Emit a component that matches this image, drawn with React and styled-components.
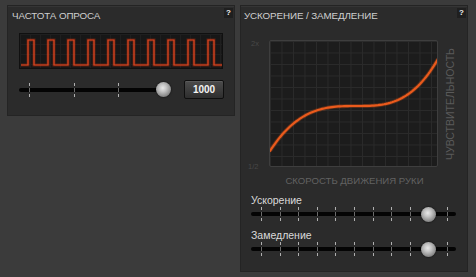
import React from "react";
import styled, { createGlobalStyle } from "styled-components";

const GlobalStyle = createGlobalStyle`
  html, body { margin: 0; padding: 0; background: #3b3b3b; }
  body { font-family: "Liberation Sans", Arial, sans-serif; }
  * { box-sizing: border-box; }
`;

const Page = styled.div`
  width: 476px;
  height: 277px;
  display: flex;
  align-items: flex-start;
  gap: 5px;
  padding: 5px 0 0 7px;
  background: #3b3b3b;
  overflow: hidden;
`;

const Panel = styled.section`
  position: relative;
  width: ${(p) => p.$w}px;
  height: ${(p) => p.$h}px;
  background: #2b2b2b;
  border: 1px solid #242424;
  box-shadow: inset 0 1px 0 #353535;
  display: flex;
  flex-direction: column;
`;

const Title = styled.h2`
  margin: 4px 0 0 ${(p) => p.$left}px;
  font-size: 9.8px;
  line-height: 12px;
  font-weight: normal;
  color: #cfcfcf;
  letter-spacing: -0.1px;
  white-space: nowrap;
`;

const Help = styled.span`
  position: absolute;
  top: 2px;
  right: 1px;
  width: 9px;
  height: 10px;
  background: #1f1f1f;
  color: #f2f2f2;
  font-size: 8px;
  font-weight: bold;
  line-height: 10px;
  text-align: center;
`;

const gridBg = (bg, line, step) => `
  background-color: ${bg};
  background-image:
    linear-gradient(to right, ${line} 1px, transparent 1px),
    linear-gradient(to bottom, ${line} 1px, transparent 1px);
  background-size: ${step}px ${step}px;
`;

const WaveBox = styled.div`
  margin: 11px 0 0 11px;
  width: 204px;
  height: 36px;
  border: 1px solid #101010;
  ${gridBg("#171717", "#1f1f1f", 10)}
  svg { display: block; }
`;

const SliderRow = styled.div`
  display: flex;
  align-items: center;
  margin: 11px 0 0 11px;
  height: 19px;
`;

const Rail = styled.div`
  position: relative;
  width: ${(p) => p.$w}px;
  height: 4px;
  background: #040404;
  border-radius: 2px;
`;

const Tick = styled.span`
  position: absolute;
  top: -5px;
  width: 1px;
  height: 14px;
  background: linear-gradient(
    to bottom,
    #b0b0b0 0 3px,
    transparent 3px 5px,
    #6a6a6a 5px 9px,
    transparent 9px 11px,
    #b0b0b0 11px 14px
  );
`;

const Knob = styled.span`
  position: absolute;
  top: -5.5px;
  width: 15px;
  height: 15px;
  margin-left: -7.5px;
  border-radius: 50%;
  background: radial-gradient(
    circle at 45% 40%,
    #e8e8e8 0%,
    #c4c4c4 30%,
    #8e8e8e 65%,
    #555555 100%
  );
  box-shadow: 0 0 2px rgba(0, 0, 0, 0.8);
`;

const ValueBox = styled.div`
  margin-left: 17px;
  width: 40px;
  height: 19px;
  border: 1px solid #0f0f0f;
  border-radius: 2px;
  background: linear-gradient(to bottom, #4c4c4c, #2e2e2e);
  box-shadow: inset 0 1px 0 #5a5a5a;
  color: #f4f4f4;
  font-size: 10px;
  font-weight: bold;
  line-height: 17px;
  text-align: center;
`;

const ChartRow = styled.div`
  display: flex;
  margin: 18px 0 0 7px;
  height: 127px;
`;

const AxisCol = styled.div`
  width: 21px;
  display: flex;
  flex-direction: column;
  justify-content: space-between;
  font-size: 7.5px;
  color: #484848;
  line-height: 8px;
`;

const AxisTop = styled.span`
  padding-left: 3px;
`;

const AxisBottom = styled.span`
  margin-bottom: -4px;
`;

const Chart = styled.div`
  width: 169px;
  height: 127px;
  border: 1px solid #3e3e3e;
  border-radius: 2px;
  ${gridBg("#1c1c1c", "#2a2a2a", 11.5)}
  svg { display: block; }
`;

const VLabel = styled.div`
  width: 24px;
  display: flex;
  align-items: center;
  justify-content: center;
  writing-mode: vertical-rl;
  transform: rotate(180deg);
  font-size: 10.5px;
  color: #5a5a5a;
  white-space: nowrap;
`;

const AxisLabel = styled.div`
  margin: 8px 0 0 29px;
  width: 169px;
  text-align: center;
  font-size: 9.6px;
  line-height: 12px;
  color: #626262;
  white-space: nowrap;
`;

const SliderBlock = styled.div`
  padding-left: 10px;
  display: flex;
  flex-direction: column;
`;

const SliderLabel = styled.div`
  margin-top: ${(p) => p.$top}px;
  margin-bottom: 5px;
  font-size: 10.5px;
  line-height: 13px;
  color: #dadada;
`;

function Slider({ width, ticks, knob }) {
  return (
    <Rail $w={width}>
      {ticks.map((t) => (
        <Tick key={t} style={{ left: t }} />
      ))}
      <Knob style={{ left: knob }} />
    </Rail>
  );
}

function Wave() {
  let d = "M1,31 H8";
  for (let i = 0; i < 10; i++) {
    const r = 8 + i * 20;
    d += ` H${r} V6 H${r + 6} V31`;
  }
  d += " H202";
  return (
    <svg width="202" height="34" viewBox="0 0 202 34">
      <path d={d} fill="none" stroke="#ff3a12" strokeOpacity="0.28" strokeWidth="3" />
      <path d={d} fill="none" stroke="#e2461f" strokeWidth="1.2" />
    </svg>
  );
}

function Curve() {
  const pts = [];
  for (let x = 0; x <= 168; x += 2) {
    const dx = x - 87;
    const y = dx < 0 ? 65 - 6.83e-5 * dx * dx * dx : 65 - 8.84e-5 * dx * dx * dx;
    pts.push(`${x},${y.toFixed(2)}`);
  }
  return (
    <svg width="167" height="125" viewBox="0 0 167 125">
      <polyline points={pts.join(" ")} fill="none" stroke="#ff5a12" strokeOpacity="0.25" strokeWidth="4" />
      <polyline points={pts.join(" ")} fill="none" stroke="#ea5a1c" strokeWidth="2.2" strokeLinecap="round" />
    </svg>
  );
}

const leftTicks = [10, 55, 99];
const rightTicks = Array.from({ length: 11 }, (_, i) => Math.round(10 + i * 18.6));

export default function App() {
  return (
    <>
      <GlobalStyle />
      <Page>
        <Panel $w={228} $h={111}>
          <Title $left={4}>ЧАСТОТА ОПРОСА</Title>
          <Help>?</Help>
          <WaveBox>
            <Wave />
          </WaveBox>
          <SliderRow>
            <Slider width={148} ticks={leftTicks} knob={144} />
            <ValueBox>1000</ValueBox>
          </SliderRow>
        </Panel>
        <Panel $w={228} $h={267}>
          <Title $left={3}>УСКОРЕНИЕ / ЗАМЕДЛЕНИЕ</Title>
          <Help>?</Help>
          <ChartRow>
            <AxisCol>
              <AxisTop>2x</AxisTop>
              <AxisBottom>1/2</AxisBottom>
            </AxisCol>
            <Chart>
              <Curve />
            </Chart>
            <VLabel>ЧУВСТВИТЕЛЬНОСТЬ</VLabel>
          </ChartRow>
          <AxisLabel>СКОРОСТЬ ДВИЖЕНИЯ РУКИ</AxisLabel>
          <SliderBlock>
            <SliderLabel $top={7}>Ускорение</SliderLabel>
            <Slider width={205} ticks={rightTicks} knob={177} />
            <SliderLabel $top={13}>Замедление</SliderLabel>
            <Slider width={205} ticks={rightTicks} knob={177} />
          </SliderBlock>
        </Panel>
      </Page>
    </>
  );
}
